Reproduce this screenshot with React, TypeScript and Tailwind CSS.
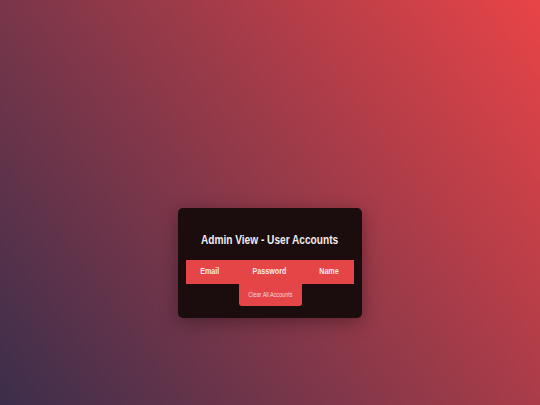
export default function App() {
  return (
    <div
      className="w-[540px] h-[405px] overflow-hidden flex justify-center items-start pt-[208px] bg-[linear-gradient(53deg,#3b2e4b_0%,#e84447_100%)]"
      style={{ fontFamily: '"Liberation Sans", Arial, sans-serif' }}
    >
      <div className="w-[184px] h-[110px] rounded-[5px] bg-[#1b0c0d] shadow-[0_4px_18px_rgba(0,0,0,0.35)] px-2 pt-[24px] flex flex-col items-center">
        <div className="h-[16px] leading-[16px] w-full flex justify-center">
          <span className="inline-block shrink-0 scale-x-75 text-[13.5px] font-bold text-[#f2eded] whitespace-nowrap">
            Admin View - User Accounts
          </span>
        </div>
        <div className="mt-[12px] w-full h-[24px] bg-[#e64548] flex items-center text-[9.5px] font-bold text-[#fbeaea] leading-[10px]">
          <div className="w-[48px] flex justify-center pb-[2px]">
            <span className="inline-block shrink-0 scale-x-75">Email</span>
          </div>
          <div className="w-[70px] flex justify-center pb-[2px]">
            <span className="inline-block shrink-0 scale-x-75">Password</span>
          </div>
          <div className="w-[50px] flex justify-center pb-[2px]">
            <span className="inline-block shrink-0 scale-x-75">Name</span>
          </div>
        </div>
        <button className="w-[63px] h-[22px] bg-[#e64548] rounded-b-[3px] flex items-center justify-center text-[7.3px] leading-[8px] text-[#f6d9d9] whitespace-nowrap">
          <span className="inline-block shrink-0 scale-x-75">Clear All Accounts</span>
        </button>
      </div>
    </div>
  );
}
